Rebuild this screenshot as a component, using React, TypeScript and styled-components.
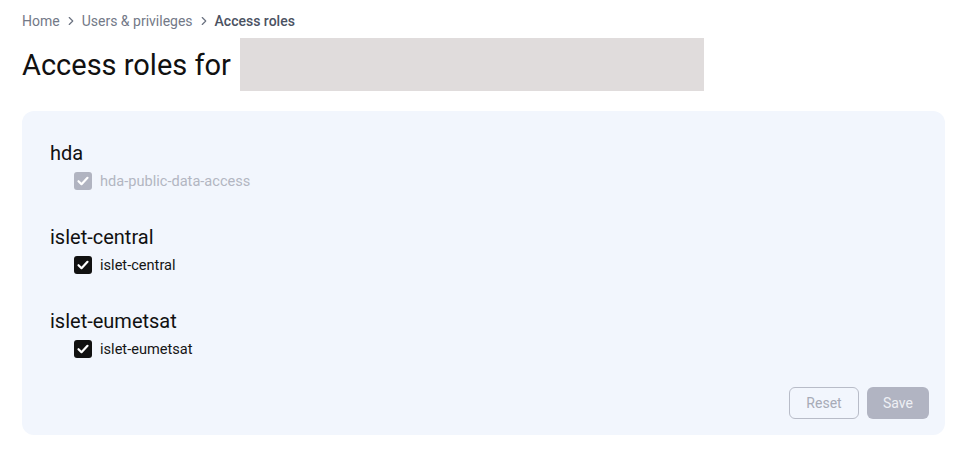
import React from "react";
import styled, { createGlobalStyle } from "styled-components";
import { ChevronRight } from "lucide-react";

interface Role {
  name: string;
  checked: boolean;
  disabled?: boolean;
}

interface Group {
  name: string;
  roles: Role[];
}

const groups: Group[] = [
  { name: "hda", roles: [{ name: "hda-public-data-access", checked: true, disabled: true }] },
  { name: "islet-central", roles: [{ name: "islet-central", checked: true }] },
  { name: "islet-eumetsat", roles: [{ name: "islet-eumetsat", checked: true }] }
];

const crumbs = ["Home", "Users & privileges", "Access roles"];

const CheckIcon = () => (
  <svg width="14" height="14" viewBox="0 0 14 14" fill="none">
    <path d="M2.5 7.2l3 3 6-6.4" stroke="#fff" strokeWidth="2.2" strokeLinecap="round" strokeLinejoin="round" />
  </svg>
);

const App: React.FC = () => (
  <>
    <GlobalStyle />
    <Page>
      <Breadcrumbs>
        {crumbs.map((c, i) => (
          <React.Fragment key={c}>
            <Crumb $current={i === crumbs.length - 1}>{c}</Crumb>
            {i < crumbs.length - 1 && (
              <Separator>
                <ChevronRight size={14} strokeWidth={2} />
              </Separator>
            )}
          </React.Fragment>
        ))}
      </Breadcrumbs>
      <TitleRow>
        <Title>Access roles for</Title>
        <NamePlaceholder />
      </TitleRow>
      <Card>
        <Groups>
          {groups.map((g) => (
            <div key={g.name}>
              <GroupName>{g.name}</GroupName>
              {g.roles.map((r) => (
                <RoleRow key={r.name} $disabled={r.disabled}>
                  <Box $disabled={r.disabled}>{r.checked && <CheckIcon />}</Box>
                  {r.name}
                </RoleRow>
              ))}
            </div>
          ))}
        </Groups>
        <Actions>
          <ResetButton disabled>Reset</ResetButton>
          <SaveButton disabled>Save</SaveButton>
        </Actions>
      </Card>
    </Page>
  </>
);

const GlobalStyle = createGlobalStyle`
  body {
    margin: 0;
    background: #ffffff;
    font-family: Roboto, "Liberation Sans", sans-serif;
    color: #151515;
  }
`;

const Page = styled.div`
  padding: 11px 27px 0 22px;
`;

const Breadcrumbs = styled.nav`
  display: flex;
  align-items: center;
  height: 20px;
  font-size: 14px;
`;

const Crumb = styled.span<{ $current?: boolean }>`
  color: ${({ $current }) => ($current ? "#4b5262" : "#737987")};
  font-weight: ${({ $current }) => ($current ? 500 : 400)};
`;

const Separator = styled.span`
  display: flex;
  align-items: center;
  margin: 0 4px;
  color: #6b7280;
`;

const TitleRow = styled.div`
  display: flex;
  align-items: center;
  gap: 9px;
  margin-top: 7px;
`;

const Title = styled.h1`
  margin: 0;
  font-size: 29px;
  font-weight: 400;
  color: #111111;
`;

const NamePlaceholder = styled.div`
  width: 464px;
  height: 53px;
  background: #e0dcdc;
`;

const Card = styled.section`
  margin-top: 20px;
  background: #f2f6fd;
  border-radius: 12px;
  padding: 28px 16px 16px 28px;
`;

const Groups = styled.div`
  display: flex;
  flex-direction: column;
  gap: 28px;
  margin-bottom: 24px;
`;

const GroupName = styled.h2`
  margin: 0;
  font-size: 20px;
  font-weight: 400;
  line-height: 28px;
  color: #111111;
`;

const RoleRow = styled.label<{ $disabled?: boolean }>`
  display: flex;
  align-items: center;
  gap: 8px;
  height: 28px;
  padding-left: 24px;
  font-size: 14.6px;
  color: ${({ $disabled }) => ($disabled ? "#b3b6c2" : "#151515")};
`;

const Box = styled.span<{ $disabled?: boolean }>`
  display: flex;
  align-items: center;
  justify-content: center;
  width: 18px;
  height: 18px;
  border-radius: 3px;
  background: ${({ $disabled }) => ($disabled ? "#b1b4c1" : "#111111")};
`;

const Actions = styled.div`
  display: flex;
  justify-content: flex-end;
  gap: 8px;
`;

const ResetButton = styled.button`
  height: 32px;
  width: 70px;
  border: 1px solid #b8bcc8;
  border-radius: 6px;
  background: transparent;
  color: #a7abb7;
  font-family: inherit;
  font-size: 14px;
`;

const SaveButton = styled.button`
  height: 32px;
  width: 62px;
  border: none;
  border-radius: 6px;
  background: #b1b4c2;
  color: #eef0f5;
  font-family: inherit;
  font-size: 14px;
`;

export default App;
